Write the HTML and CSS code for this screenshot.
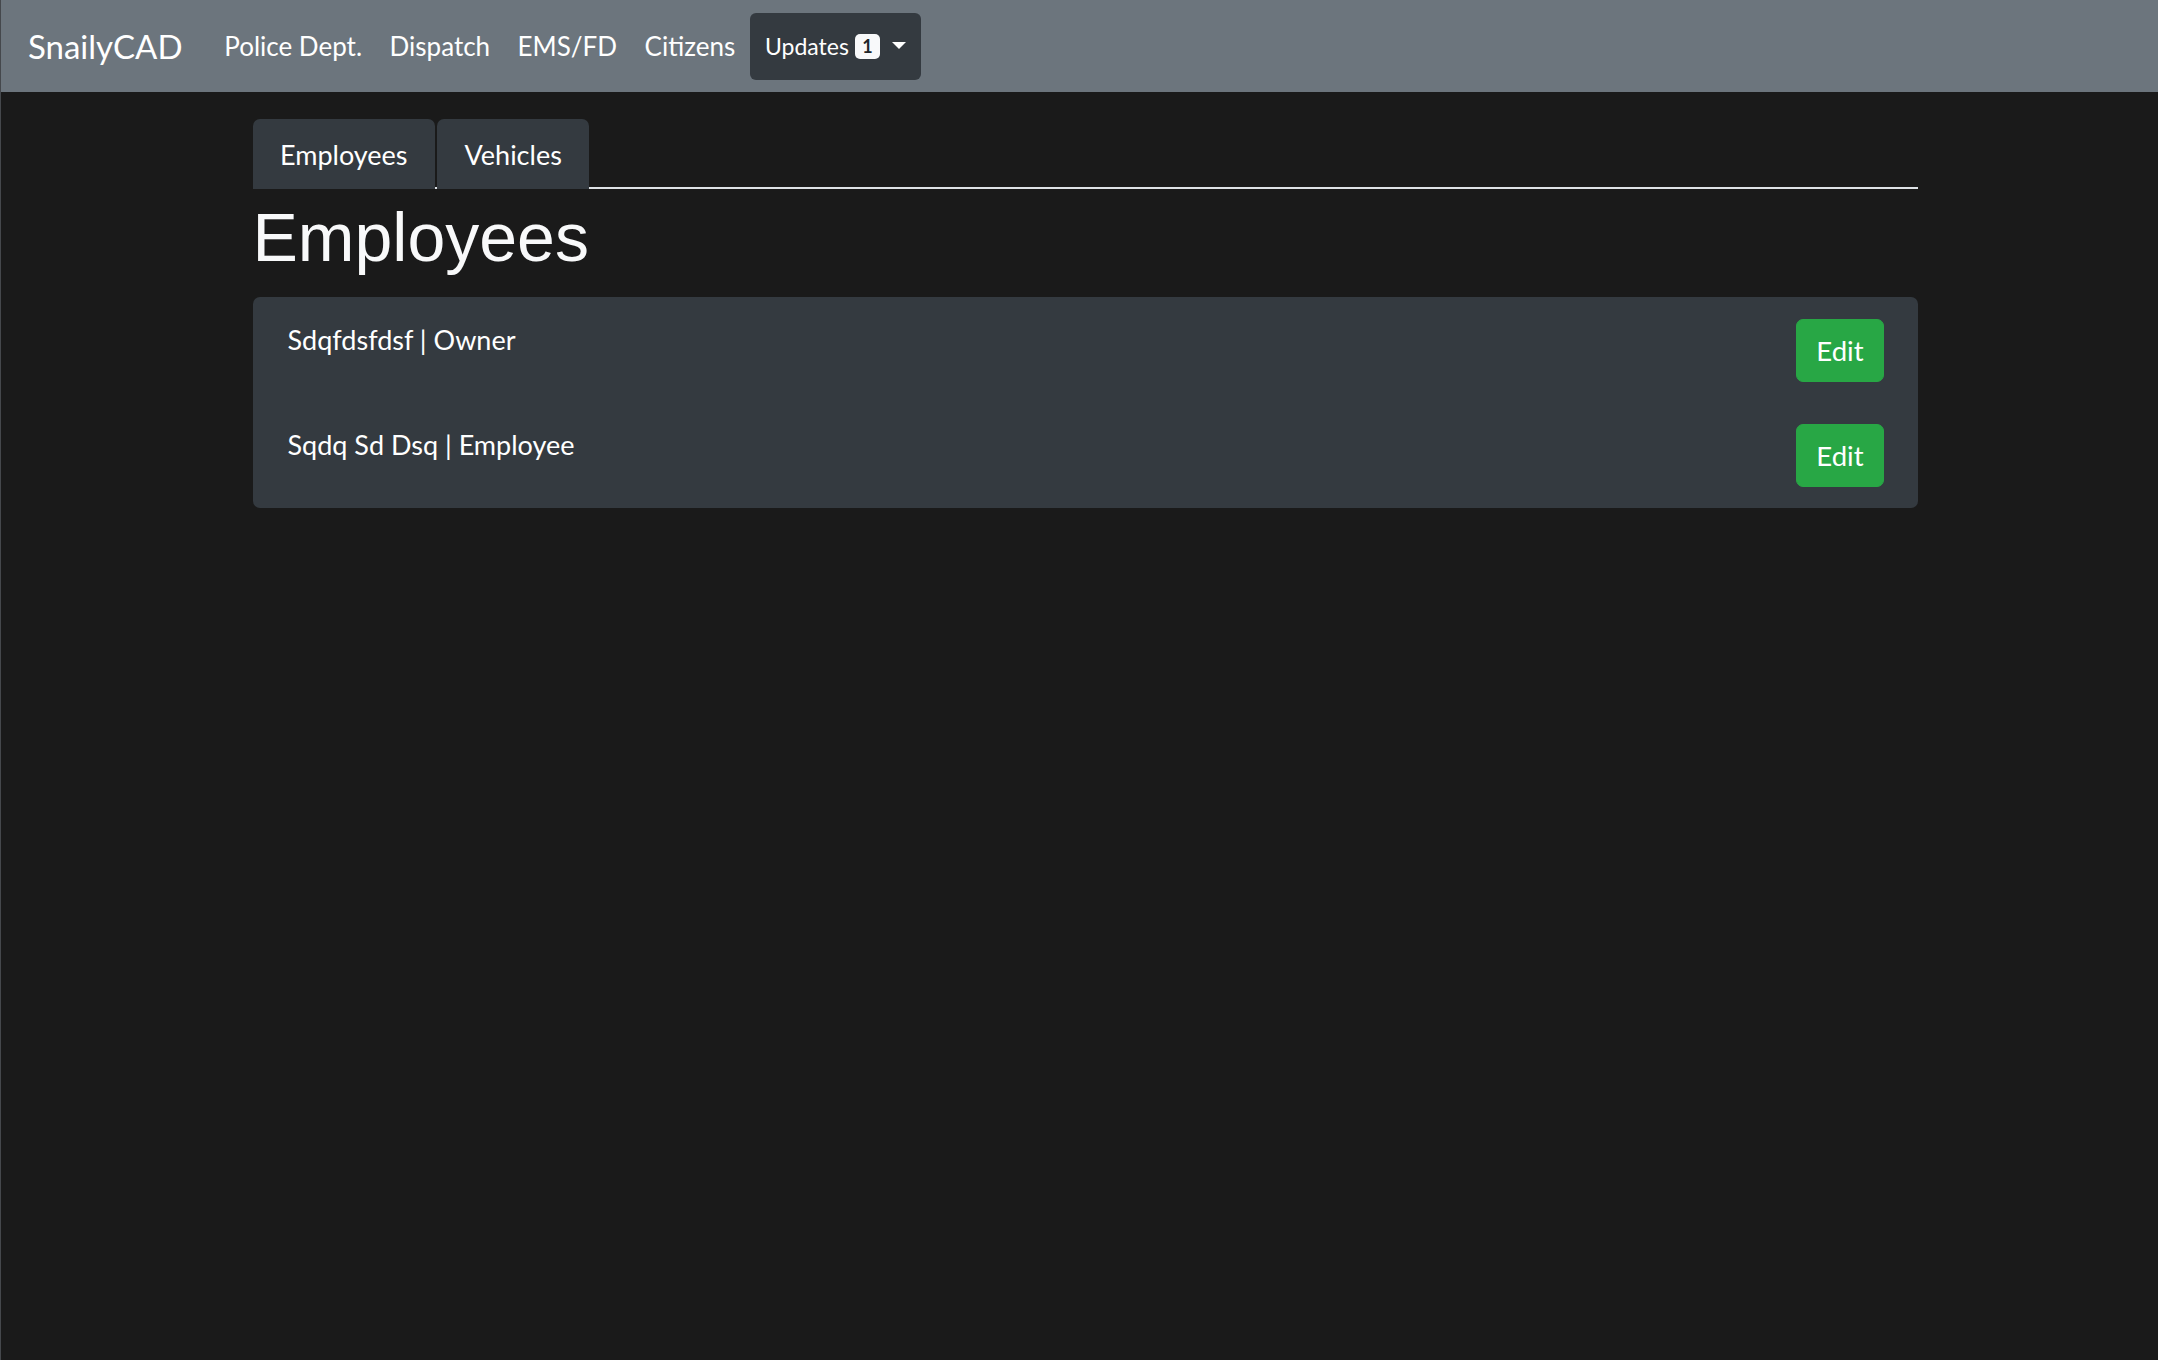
FILE: index.html
```html
<!DOCTYPE html>
<html lang="en">
<head>
<meta charset="utf-8">
<title>SnailyCAD</title>
<link rel="stylesheet" href="styles.css">
</head>
<body>
<nav class="navbar">
  <a class="brand" href="#">SnailyCAD</a>
  <ul class="nav-links">
    <li><a class="nav-link" href="#">Police Dept.</a></li>
    <li><a class="nav-link" href="#">Dispatch</a></li>
    <li><a class="nav-link" href="#">EMS/FD</a></li>
    <li><a class="nav-link" href="#">Citizens</a></li>
    <li>
      <button class="updates-btn" type="button">
        <span>Updates</span>
        <span class="badge">1</span>
        <span class="caret"></span>
      </button>
    </li>
  </ul>
</nav>
<main class="page">
  <div class="container">
    <div class="tabs">
      <a class="tab" href="#">Employees</a>
      <a class="tab" href="#">Vehicles</a>
    </div>
    <h1 class="title">Employees</h1>
    <ul class="list">
      <li class="list-item">
        <span class="item-text">Sdqfdsfdsf | Owner</span>
        <button class="btn-edit" type="button">Edit</button>
      </li>
      <li class="list-item">
        <span class="item-text">Sqdq Sd Dsq | Employee</span>
        <button class="btn-edit" type="button">Edit</button>
      </li>
    </ul>
  </div>
</main>
</body>
</html>
```

FILE: styles.css
```css
* {
  box-sizing: border-box;
}

html, body {
  margin: 0;
  padding: 0;
  height: 100%;
}

body {
  background: #1a1a1a;
  border-left: 1px solid #45484c;
  font-family: Lato, "Noto Sans", sans-serif;
  color: #ffffff;
}

a {
  text-decoration: none;
  color: inherit;
}

.navbar {
  display: flex;
  align-items: center;
  height: 92px;
  padding: 0 27px;
  background: #6c757d;
}

.brand {
  font-size: 33px;
  line-height: 50px;
  color: #ffffff;
  margin-right: 28px;
}

.nav-links {
  display: flex;
  align-items: center;
  list-style: none;
  margin: 0;
  padding: 0;
}

.nav-link {
  display: block;
  padding: 0 13.75px;
  font-size: 26px;
  line-height: 41px;
  color: #ffffff;
}

.updates-btn {
  display: inline-flex;
  align-items: center;
  height: 67px;
  padding: 0 15px;
  margin-left: 1px;
  border: none;
  border-radius: 6px;
  background: #343a40;
  color: #ffffff;
  font-family: Lato, "Noto Sans", sans-serif;
  font-size: 23px;
}

.badge {
  display: inline-flex;
  align-items: center;
  justify-content: center;
  width: 25px;
  height: 25px;
  margin-left: 6px;
  border-radius: 5px;
  background: #f8f9fa;
  color: #212529;
  font-size: 18px;
  font-weight: 700;
}

.caret {
  display: inline-block;
  width: 0;
  height: 0;
  margin-left: 12px;
  margin-top: -2px;
  border-top: 7px solid #ffffff;
  border-left: 7px solid transparent;
  border-right: 7px solid transparent;
}

.page {
  padding: 27px 0 0 11px;
}

.container {
  width: 1665px;
  margin: 0 auto;
}

.tabs {
  display: flex;
  border-bottom: 2px solid #dee2e6;
}

.tab {
  display: flex;
  align-items: center;
  height: 70px;
  margin-bottom: -2px;
  margin-right: 2px;
  padding: 0 27.5px;
  border-radius: 7px 7px 0 0;
  background: #343a40;
  color: #ffffff;
  font-size: 27px;
  line-height: 41px;
}

.title {
  margin: 6px 0 18px;
  font-family: "Liberation Sans", Arial, sans-serif;
  font-weight: 400;
  font-size: 68px;
  line-height: 84px;
  color: #f8f9fa;
}

.list {
  list-style: none;
  margin: 0;
  padding: 0;
  background: #343a40;
  border-radius: 7px;
}

.list-item {
  display: flex;
  justify-content: space-between;
  align-items: flex-start;
  padding: 21.5px 34px 21px 35px;
}

.item-text {
  font-size: 27px;
  line-height: 41px;
  color: #ffffff;
}

.btn-edit {
  height: 63px;
  padding: 0 19px;
  border: 1px solid #28a745;
  border-radius: 7px;
  background: #28a745;
  color: #ffffff;
  font-family: Lato, "Noto Sans", sans-serif;
  font-size: 27.5px;
  line-height: 41px;
}
```
